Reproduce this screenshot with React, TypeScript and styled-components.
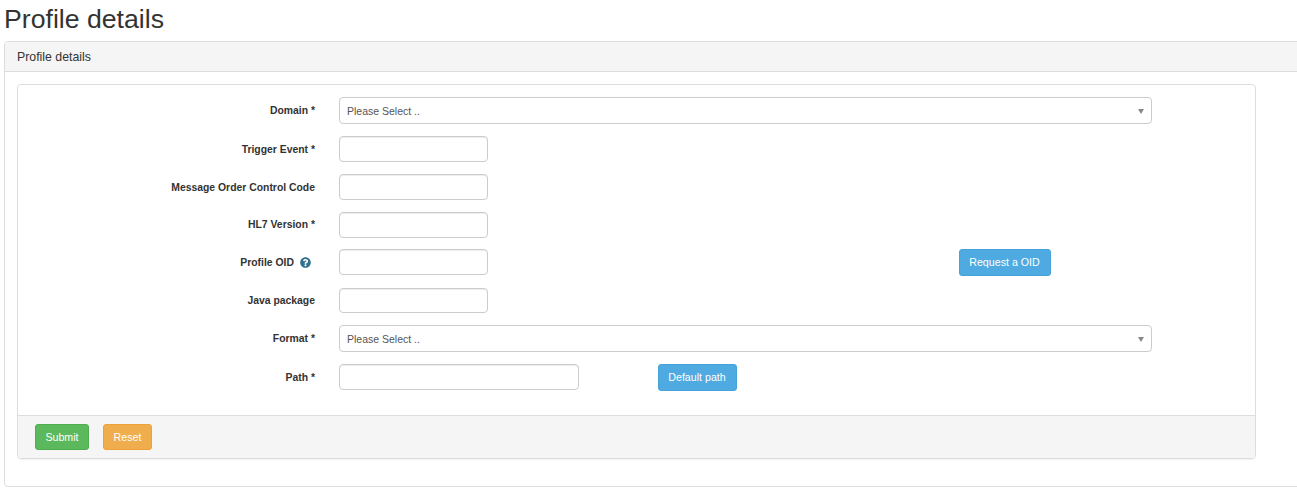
import React from "react";
import styled, { createGlobalStyle } from "styled-components";
import { FaQuestionCircle } from "react-icons/fa";

const Global = createGlobalStyle`
  html, body { margin: 0; padding: 0; background: #fff; overflow: hidden; }
  body { font-family: "Liberation Sans", Arial, sans-serif; color: #333; }
  * { box-sizing: border-box; }
`;

const Page = styled.div`
  width: 1297px;
  height: 495px;
  overflow: hidden;
`;

const Title = styled.h2`
  margin: 0;
  padding: 4px 0 0 4px;
  height: 41px;
  font-size: 26.67px;
  line-height: 30px;
  font-weight: 400;
  color: #333;
`;

const OuterPanel = styled.section`
  margin-left: 4px;
  width: 1320px;
  height: 446px;
  border: 1px solid #ddd;
  border-radius: 4px;
`;

const OuterHeading = styled.div`
  height: 30px;
  padding: 0 12px;
  display: flex;
  align-items: center;
  background: #f5f5f5;
  border-bottom: 1px solid #ddd;
  border-radius: 3px 3px 0 0;
  font-size: 12.33px;
  color: #333;
`;

const OuterBody = styled.div`
  padding: 12px;
`;

const InnerPanel = styled.div`
  width: 1239px;
  height: 375px;
  display: flex;
  flex-direction: column;
  border: 1px solid #ddd;
  border-radius: 4px;
  box-shadow: 0 1px 1px rgba(0, 0, 0, 0.05);
`;

const FormBody = styled.div`
  flex: 1;
  padding-top: 12px;
`;

const Row = styled.div<{ $top?: number }>`
  display: flex;
  align-items: flex-start;
  margin-top: ${(p) => p.$top ?? 0}px;
`;

const Label = styled.label<{ $short?: boolean }>`
  width: 297px;
  height: ${(p) => (p.$short ? 25 : 26)}px;
  padding-top: ${(p) => (p.$short ? 0 : 1)}px;
  margin-right: 24px;
  flex: none;
  display: flex;
  justify-content: flex-end;
  align-items: center;
  font-size: 10.4px;
  font-weight: 700;
  color: #333;
`;

const HelpIcon = styled(FaQuestionCircle)`
  margin: 0 4px 0 6px;
  width: 11px;
  height: 11px;
  color: #31708f;
`;

const TextInput = styled.input<{ $width?: number; $height?: number }>`
  width: ${(p) => p.$width ?? 149}px;
  height: ${(p) => p.$height ?? 26}px;
  flex: none;
  padding: 0 8px;
  border: 1px solid #ccc;
  border-radius: 4px;
  background: #fff;
  box-shadow: inset 0 1px 1px rgba(0, 0, 0, 0.075);
`;

const SelectBox = styled.div`
  position: relative;
  width: 813px;
  height: 27px;
  display: flex;
  align-items: center;
  padding: 1px 0 0 7px;
  border: 1px solid #ccc;
  border-radius: 4px;
  background: #fff;
  font-size: 10.5px;
  color: #555;
`;

const Caret = styled.span`
  position: absolute;
  right: 7px;
  top: 11px;
  width: 0;
  height: 0;
  border-left: 3px solid transparent;
  border-right: 3px solid transparent;
  border-top: 5px solid #888;
`;

const Button = styled.button<{ $bg: string; $border: string; $width: number; $left?: number }>`
  width: ${(p) => p.$width}px;
  height: 27px;
  margin-left: ${(p) => p.$left ?? 0}px;
  flex: none;
  padding: 0 1px 1px 0;
  border: 1px solid ${(p) => p.$border};
  border-radius: 3px;
  background: ${(p) => p.$bg};
  color: #fff;
  font: 400 10.67px "Liberation Sans", Arial, sans-serif;
`;

const FooterButton = styled(Button)`
  height: 26px;
  padding: 0;
`;

const Footer = styled.div`
  height: 43px;
  display: flex;
  align-items: flex-start;
  gap: 14px;
  padding: 8px 17px 0;
  background: #f5f5f5;
  border-top: 1px solid #ddd;
  border-radius: 0 0 3px 3px;
`;

const BLUE = { $bg: "#4eaae0", $border: "#46a3d9" };

export default function App() {
  return (
    <Page>
      <Global />
      <Title>Profile details</Title>
      <OuterPanel>
        <OuterHeading>Profile details</OuterHeading>
        <OuterBody>
          <InnerPanel>
            <FormBody>
              <Row>
                <Label>Domain *</Label>
                <SelectBox>Please Select ..<Caret /></SelectBox>
              </Row>
              <Row $top={12}>
                <Label>Trigger Event *</Label>
                <TextInput />
              </Row>
              <Row $top={12}>
                <Label>Message Order Control Code</Label>
                <TextInput />
              </Row>
              <Row $top={12}>
                <Label $short>HL7 Version *</Label>
                <TextInput />
              </Row>
              <Row $top={11}>
                <Label>Profile OID <HelpIcon /></Label>
                <TextInput />
                <Button {...BLUE} $width={92} $left={471}>Request a OID</Button>
              </Row>
              <Row $top={12}>
                <Label $short>Java package</Label>
                <TextInput $height={25} />
              </Row>
              <Row $top={12}>
                <Label>Format *</Label>
                <SelectBox>Please Select ..<Caret /></SelectBox>
              </Row>
              <Row $top={12}>
                <Label>Path *</Label>
                <TextInput $width={240} />
                <Button {...BLUE} $width={79} $left={79}>Default path</Button>
              </Row>
            </FormBody>
            <Footer>
              <FooterButton $bg="#5cb85c" $border="#4cae4c" $width={54}>Submit</FooterButton>
              <FooterButton $bg="#f0ad4e" $border="#eea236" $width={49}>Reset</FooterButton>
            </Footer>
          </InnerPanel>
        </OuterBody>
      </OuterPanel>
    </Page>
  );
}
